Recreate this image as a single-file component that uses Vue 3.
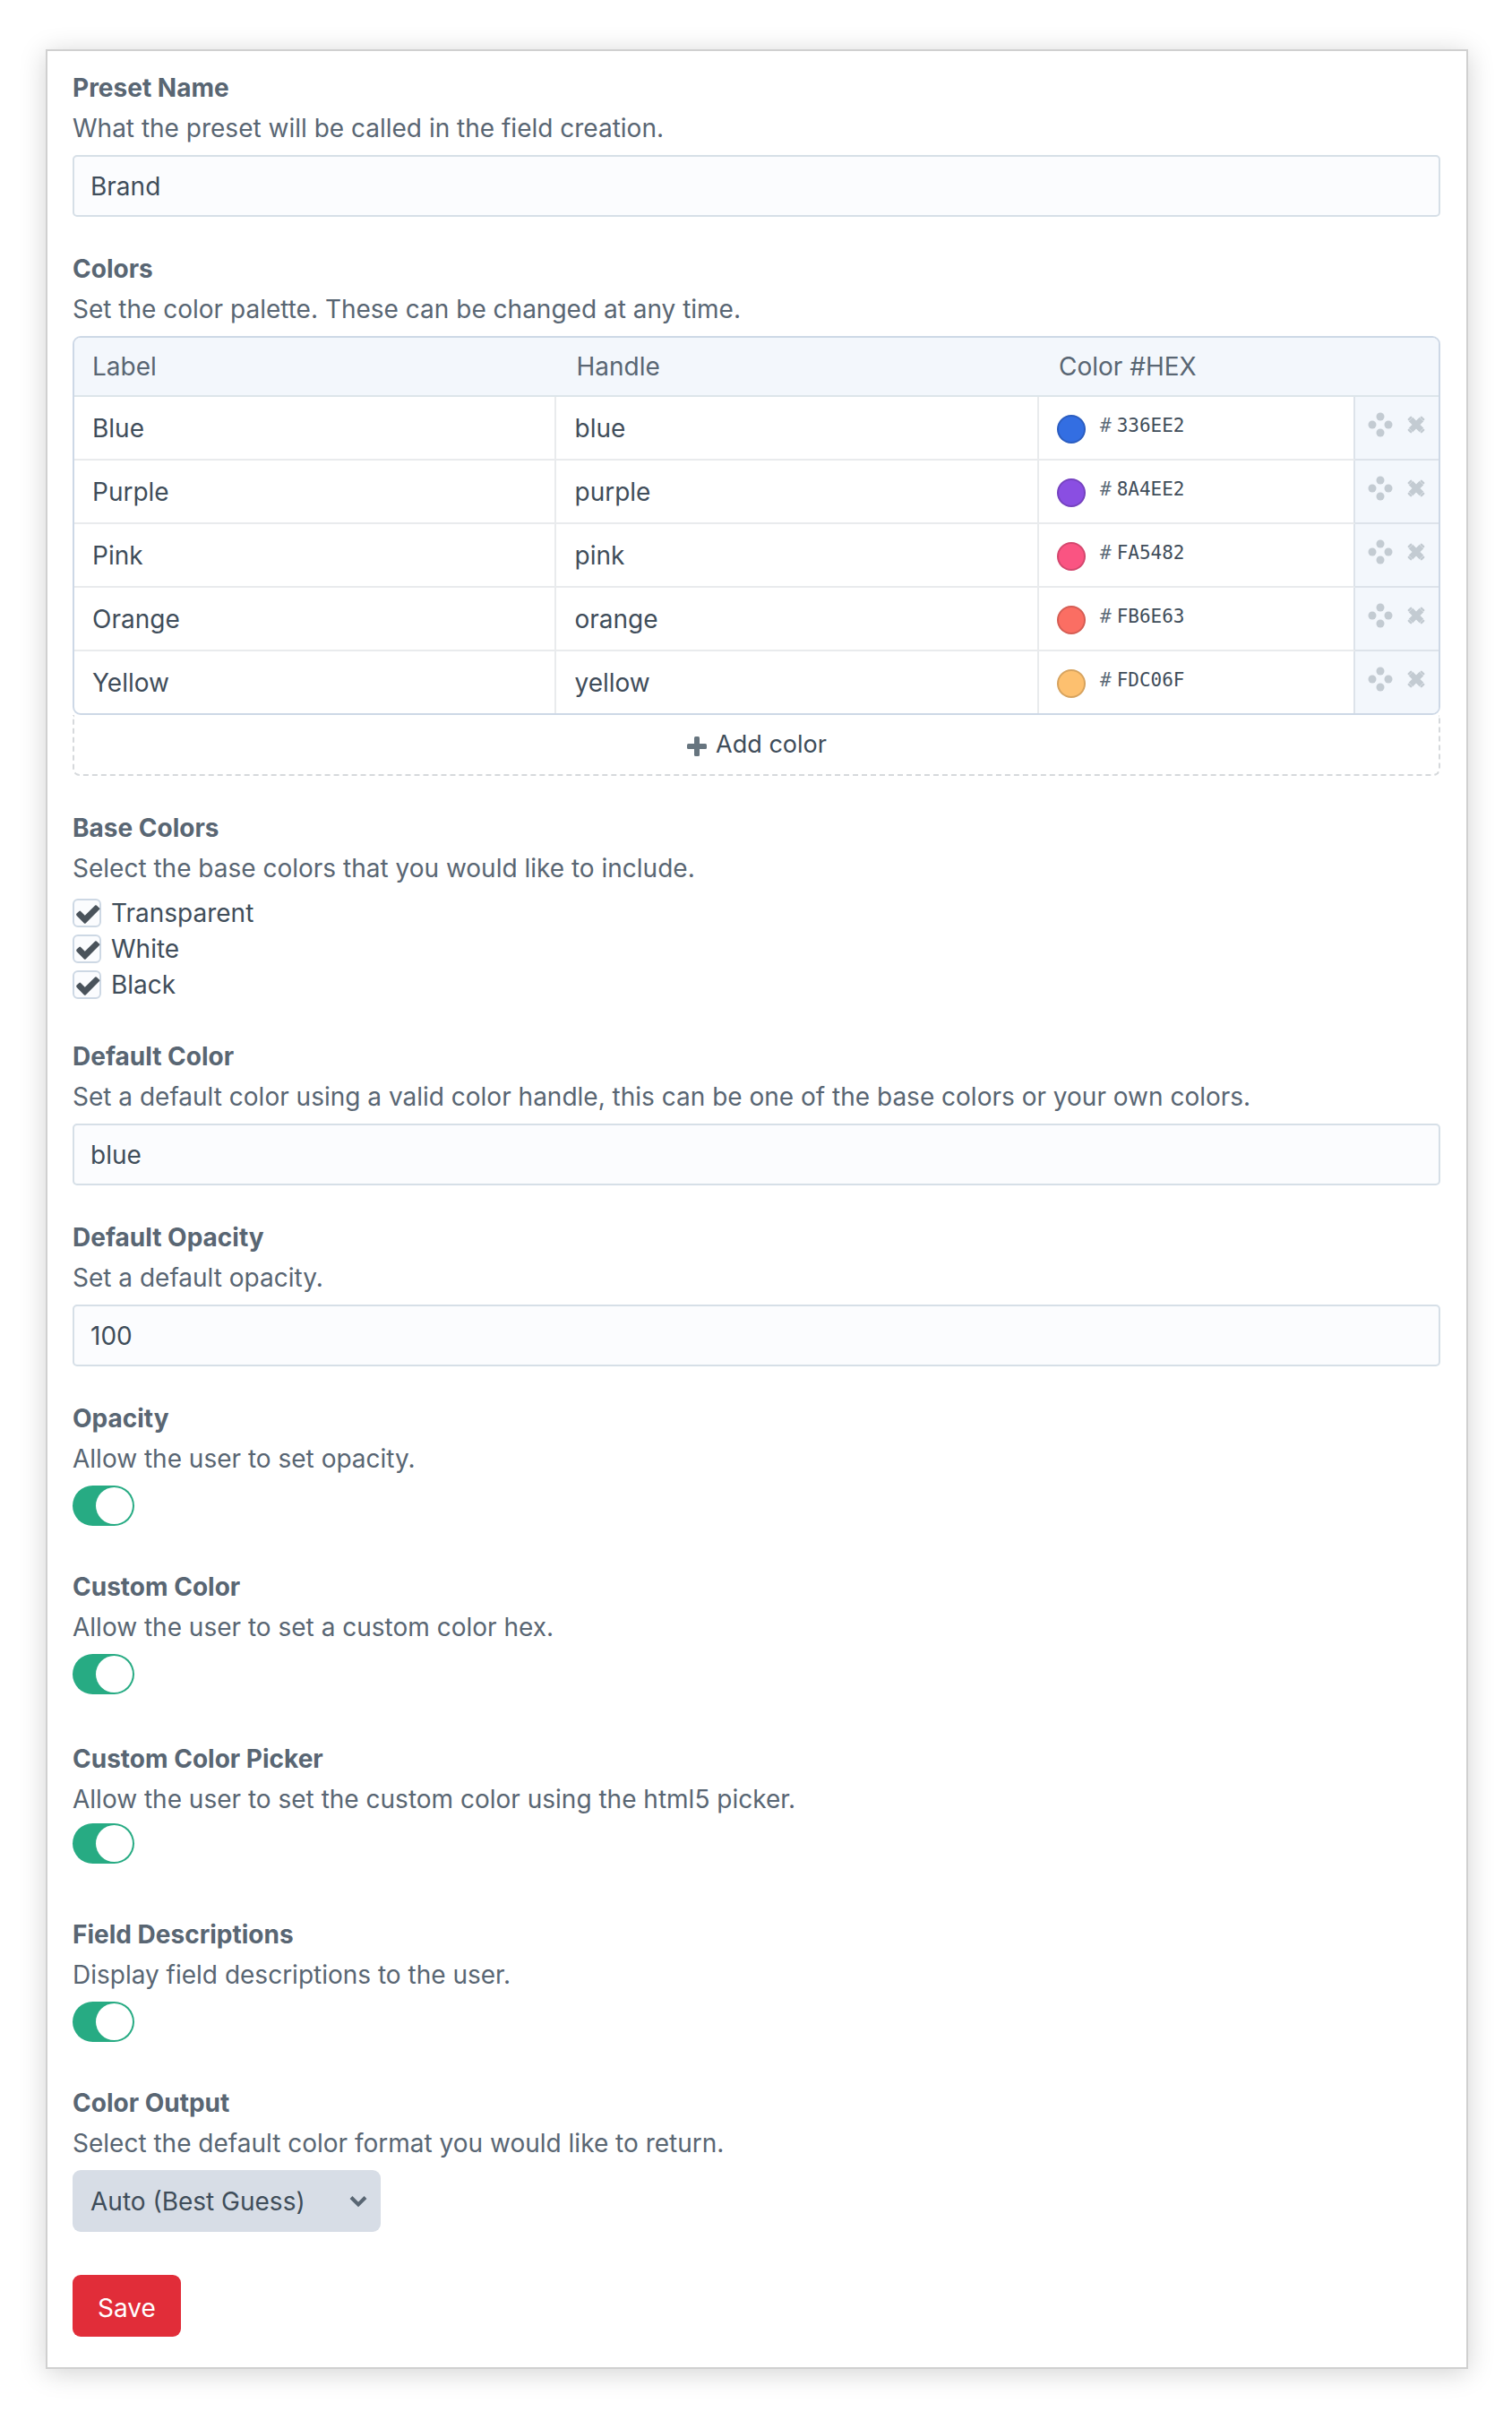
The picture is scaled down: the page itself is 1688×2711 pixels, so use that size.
<script setup>
import { reactive } from 'vue'

const form = reactive({
  name: 'Brand',
  defaultColor: 'blue',
  defaultOpacity: '100',
  output: 'auto',
})

const colors = reactive([
  { label: 'Blue', handle: 'blue', hex: '336EE2' },
  { label: 'Purple', handle: 'purple', hex: '8A4EE2' },
  { label: 'Pink', handle: 'pink', hex: 'FA5482' },
  { label: 'Orange', handle: 'orange', hex: 'FB6E63' },
  { label: 'Yellow', handle: 'yellow', hex: 'FDC06F' },
])

const baseColors = reactive([
  { label: 'Transparent', checked: true },
  { label: 'White', checked: true },
  { label: 'Black', checked: true },
])

const switches = reactive([
  { id: 'opacity', label: 'Opacity', text: 'Allow the user to set opacity.', on: true },
  { id: 'custom', label: 'Custom Color', text: 'Allow the user to set a custom color hex.', on: true },
  { id: 'picker', label: 'Custom Color Picker', text: 'Allow the user to set the custom color using the html5 picker.', on: true },
  { id: 'descriptions', label: 'Field Descriptions', text: 'Display field descriptions to the user.', on: true },
])

function addColor() {
  colors.push({ label: '', handle: '', hex: '' })
}
</script>

<template>
  <main class="page">
    <form class="card" @submit.prevent>
      <section class="field">
        <label class="heading" for="name">Preset Name</label>
        <p class="hint">What the preset will be called in the field creation.</p>
        <input id="name" v-model="form.name" class="text" type="text" />
      </section>

      <section class="field">
        <h2 class="heading">Colors</h2>
        <p class="hint">Set the color palette. These can be changed at any time.</p>
        <div class="table-wrap">
          <table>
            <colgroup>
              <col />
              <col />
              <col class="col-hex" />
              <col class="col-actions" />
            </colgroup>
            <thead>
              <tr>
                <th scope="col">Label</th>
                <th scope="col">Handle</th>
                <th scope="col" colspan="2">Color #HEX</th>
              </tr>
            </thead>
            <tbody>
              <tr v-for="(color, i) in colors" :key="i">
                <td><input v-model="color.label" class="cell" type="text" aria-label="Label" /></td>
                <td><input v-model="color.handle" class="cell" type="text" aria-label="Handle" /></td>
                <td>
                  <label class="hex">
                    <span class="swatch" :style="{ backgroundColor: '#' + color.hex }"></span>
                    <span class="hex-value">
                      <span class="hash">#</span>
                      <input v-model="color.hex" class="hex-input" type="text" maxlength="6" aria-label="Color hex" />
                    </span>
                  </label>
                </td>
                <td class="actions">
                  <div class="action-row">
                    <button type="button" aria-label="Reorder">
                      <svg width="28" height="28" viewBox="0 0 28 28">
                        <circle cx="14" cy="5" r="4.5" />
                        <circle cx="5" cy="14" r="4.5" />
                        <circle cx="23" cy="14" r="4.5" />
                        <circle cx="14" cy="23" r="4.5" />
                      </svg>
                    </button>
                    <button type="button" aria-label="Delete" @click="colors.splice(i, 1)">
                      <svg width="20" height="20" viewBox="0 0 20 20">
                        <path d="M4 4L16 16M16 4L4 16" stroke-width="6.4" />
                        <path class="tips" d="M4.2 1.8L1.8 4.2M15.8 1.8L18.2 4.2M1.8 15.8L4.2 18.2M18.2 15.8L15.8 18.2" stroke-width="2.4" />
                      </svg>
                    </button>
                  </div>
                </td>
              </tr>
            </tbody>
          </table>
        </div>
        <button class="add" type="button" @click="addColor">
          <svg width="24" height="24" viewBox="0 0 24 24">
            <rect x="9" y="1" width="6" height="22" rx="1.5" />
            <rect x="1" y="9" width="22" height="6" rx="1.5" />
          </svg>
          Add color
        </button>
      </section>

      <section class="field field-checks">
        <h2 class="heading">Base Colors</h2>
        <p class="hint">Select the base colors that you would like to include.</p>
        <div class="checks">
          <label v-for="base in baseColors" :key="base.label" class="check">
            <span class="box">
              <input v-model="base.checked" type="checkbox" />
              <svg v-if="base.checked" width="32" height="32" viewBox="0 0 32 32">
                <path d="M4.6 16.6L7.4 13.9Q8.2 13.1 9 13.9L13.8 18.7L25.2 7.6Q26 6.8 26.8 7.6L30 10.4Q30.8 11.2 30 12L14.9 27.2Q13.8 28.3 12.7 27.2L4.6 18.9Q3.6 17.8 4.6 16.6Z" />
              </svg>
            </span>
            {{ base.label }}
          </label>
        </div>
      </section>

      <section class="field">
        <label class="heading" for="default-color">Default Color</label>
        <p class="hint">Set a default color using a valid color handle, this can be one of the base colors or your own colors.</p>
        <input id="default-color" v-model="form.defaultColor" class="text" type="text" />
      </section>

      <section class="field">
        <label class="heading" for="default-opacity">Default Opacity</label>
        <p class="hint">Set a default opacity.</p>
        <input id="default-opacity" v-model="form.defaultOpacity" class="text" type="text" />
      </section>

      <section v-for="item in switches" :key="item.id" class="field field-switch" :class="'field-' + item.id">
        <label class="heading" :for="item.id">{{ item.label }}</label>
        <p class="hint">{{ item.text }}</p>
        <input :id="item.id" v-model="item.on" class="switch" type="checkbox" role="switch" />
      </section>

      <section class="field field-output">
        <label class="heading" for="output">Color Output</label>
        <p class="hint">Select the default color format you would like to return.</p>
        <div class="select">
          <select id="output" v-model="form.output">
            <option value="auto">Auto (Best Guess)</option>
          </select>
          <svg width="20" height="14" viewBox="0 0 20 14">
            <path d="M2 2.5L10 10.5L18 2.5" />
          </svg>
        </div>
      </section>

      <button class="save" type="submit">Save</button>
    </form>
  </main>
</template>

<style>
body {
  margin: 0;
  background: #fff;
}
</style>

<style scoped>
* {
  box-sizing: border-box;
}

.page {
  padding: 55px 49px 67px 51px;
  font-family: Inter, "Liberation Sans", sans-serif;
  font-size: 28px;
  color: #3f4d5a;
}

input,
select,
button {
  margin: 0;
  font: inherit;
  color: inherit;
}

button {
  cursor: pointer;
}

.card {
  padding: 19px 29px 34px 28px;
  border: 2px solid #d0d0d0;
  background: #fff;
  box-shadow: 0 4px 28px rgba(0, 0, 0, 0.18);
}

.field {
  margin-bottom: 36px;
}

.heading {
  display: block;
  margin: 0;
  font-size: 28px;
  font-weight: 700;
  line-height: 45px;
  color: #596673;
}

.hint {
  margin: 0 0 8px;
  line-height: 44px;
  color: #596673;
}

.text {
  display: block;
  width: 100%;
  height: 69px;
  padding: 0 18px;
  border: 2px solid #d6dfe7;
  border-radius: 5px;
  background: #fbfcfe;
}

.table-wrap {
  overflow: hidden;
  border: 2px solid #cdd8e6;
  border-radius: 9px;
}

table {
  width: 100%;
  table-layout: fixed;
  border-collapse: separate;
  border-spacing: 0;
}

.col-hex {
  width: 353px;
}

.col-actions {
  width: 93px;
}

th {
  height: 66px;
  padding: 0 22px;
  border-bottom: 2px solid #dde5ea;
  background: #f3f7fc;
  font-weight: 400;
  text-align: left;
  color: #596673;
}

th:first-child {
  padding-left: 20px;
}

td {
  height: 71px;
  padding: 0;
  border-right: 2px solid #e9ebed;
  border-bottom: 2px solid #e9ebed;
}

tbody tr:last-child td {
  height: 69px;
  border-bottom: 0;
}

td:nth-child(3) {
  border-right-color: #dde3ea;
}

td.actions {
  border-right: 0;
  border-bottom-color: #dde3ea;
  background: #f3f7fc;
}

.cell {
  display: block;
  width: 100%;
  height: 69px;
  padding: 0 20px;
  border: 0;
  background: transparent;
}

.hex {
  display: flex;
  align-items: flex-start;
  gap: 16px;
  height: 69px;
  padding: 20px 20px 0;
}

.swatch {
  width: 32px;
  height: 32px;
  border: 2px solid rgba(0, 0, 0, 0.15);
  border-radius: 50%;
}

.hex-value {
  display: flex;
  align-items: center;
  gap: 6px;
  height: 24px;
  font-family: "DejaVu Sans Mono", monospace;
  font-size: 21px;
  line-height: 24px;
}

.hash {
  color: #5d6b78;
}

.hex-input {
  width: 120px;
  height: 24px;
  padding: 0;
  border: 0;
  background: transparent;
}

.action-row {
  display: flex;
  align-items: center;
  gap: 16px;
  height: 69px;
  padding: 0 0 8px 14px;
}

.action-row button {
  display: flex;
  padding: 0;
  border: 0;
  background: none;
}

.action-row svg {
  fill: #c3cbd2;
  stroke: none;
}

.action-row path {
  fill: none;
  stroke: #c3cbd2;
}

.action-row .tips {
  stroke-linecap: round;
}

.add {
  display: flex;
  align-items: center;
  justify-content: center;
  gap: 9px;
  width: 100%;
  height: 68px;
  padding: 0 0 1px;
  border: 2px dashed #d6d9dc;
  border-top: 0;
  border-radius: 0 0 8px 8px;
  background: transparent;
  font-size: 27px;
}

.add svg {
  margin-top: 4px;
  fill: #67757f;
}

.field-checks {
  margin-bottom: 42px;
}

.checks {
  display: flex;
  flex-direction: column;
  align-items: flex-start;
  gap: 8px;
  padding-top: 4px;
}

.check {
  display: flex;
  align-items: center;
  gap: 11px;
  height: 32px;
  line-height: 32px;
}

.box {
  display: grid;
}

.box > * {
  grid-area: 1 / 1;
}

.box input {
  width: 32px;
  height: 32px;
  appearance: none;
  border: 2px solid #cdd8e4;
  border-radius: 6px;
  background: #fbfcfe;
}

.box svg {
  fill: #4a535b;
  pointer-events: none;
}

.field-switch {
  margin-bottom: 46px;
}

.field-custom {
  margin-bottom: 50px;
}

.field-picker {
  margin-bottom: 57px;
}

.field-picker .hint {
  margin-bottom: 5px;
}

.switch {
  display: block;
  width: 69px;
  height: 45px;
  padding: 2px;
  appearance: none;
  border-radius: 23px;
  background: #8f9ba8;
}

.switch::before {
  display: block;
  width: 41px;
  height: 41px;
  border-radius: 50%;
  background: #fff;
  content: "";
}

.switch:checked {
  background: #27ab83;
}

.switch:checked::before {
  margin-left: auto;
}

.field-output {
  margin-bottom: 48px;
}

.select {
  display: grid;
  width: fit-content;
}

.select > * {
  grid-area: 1 / 1;
}

.select select {
  width: 344px;
  height: 69px;
  padding: 0 60px 0 20px;
  appearance: none;
  border: 0;
  border-radius: 9px;
  background: #d7dde6;
}

.select svg {
  align-self: center;
  justify-self: end;
  margin-right: 15px;
  fill: none;
  stroke: #596673;
  stroke-width: 4;
  pointer-events: none;
}

.save {
  display: block;
  height: 69px;
  padding: 4px 28px 0;
  border: 0;
  border-radius: 9px;
  background: #e12d39;
  color: #fff;
}
</style>
